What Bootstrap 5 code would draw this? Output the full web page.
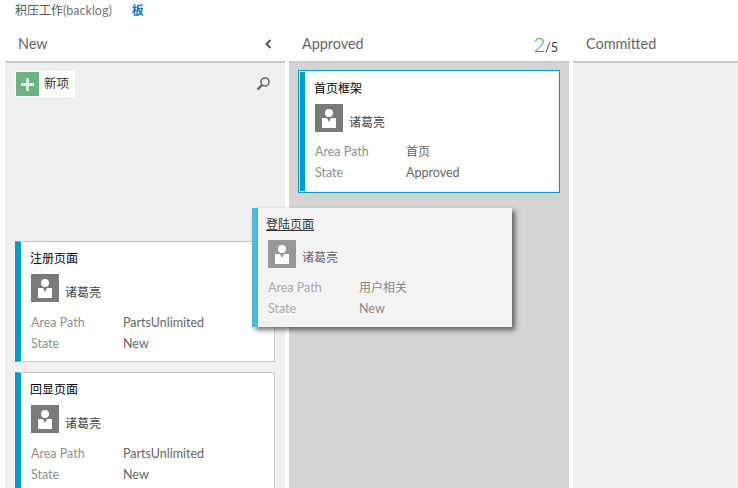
<!DOCTYPE html>
<html lang="zh"><head><meta charset="utf-8">
<link href="https://cdn.jsdelivr.net/npm/bootstrap@5.3.0/dist/css/bootstrap.min.css" rel="stylesheet">
<style>
html,body{height:488px;overflow:hidden;background:#fff}
body{font-family:"Lato","Noto Sans CJK SC",sans-serif;font-size:12px;color:#333;position:relative;width:738px}
.crumbs{height:26px;padding:3px 0 0 15px;font-size:12px;line-height:16px;color:#555;gap:20px}
.crumbs .cur{color:#007acc;font-weight:600}
.crumbs .en{color:#777;font-size:12.5px}
.board{height:462px;padding-left:5px;gap:4px;overflow:hidden}
.col-k{width:280px;flex:none}
.col-last{flex:1 1 auto;min-width:0}
.head{padding:9px 11px 0 13px;font-size:14.4px;line-height:18px;color:#666;border-bottom:2px solid #c8c8c8;box-sizing:content-box;height:26px}
.body-n,.body-c{background:#f0f0f0}
.body-a{background:#d4d4d4;padding:7px 9px;height:425px}
.body-n{padding:8px 10px;height:425px;overflow:hidden}
.body-c{height:425px}
.add{background:#fff;height:26px;padding-right:6px;font-size:12.5px;gap:5px}
.plus{width:23px;height:24px;background:#6bb37f;margin:1px 0 1px 1px}
.addrow{height:26px}
.spacer{height:144px}
.kcard{background:#fff;border:1px solid #c8c8c8;border-left:6px solid #009ccc;height:121px;padding:8px 10px;margin-bottom:10px;width:260px}
.kcard .t{color:#000;font-size:12px;line-height:18px;height:18px;margin-left:-1px}
.kcard.sel{width:262px;height:123px;border-color:#009ccc;border-left-width:7px;outline:1px solid #e8f4f8;outline-offset:-2px}
.kcard.sel .t{margin-top:1px}
.who{margin-top:6px;height:28px;font-size:12px;gap:6px;color:#444}
.who span{padding-top:11px;line-height:16px}
.ava{width:28px;height:28px;flex:none;display:block}
.f{line-height:21px;height:21px;font-size:12.5px;color:#666}
.f b{font-weight:400;color:#8f8f8f;width:92px;flex:none}
.f .zh{font-size:12px}
.fields{margin-top:10px}
.sel .fields{margin-top:9px}
.sel .f b,.drag .f b{width:91px}
.drag{position:absolute;left:252px;top:208px;height:119px;width:260px;margin:0;border-width:0 0 0 6px;border-left-color:#4bb8dc;background:#f3f3f3;box-shadow:3px 3px 5px rgba(0,0,0,.55);padding:7px 10px;color:#777}
.drag .t{color:#333;text-decoration:underline;margin:1px 0 0 -2px}
.drag .who{color:#666;margin-top:6px}
.drag .who span{padding-top:10px}
.drag .ava{opacity:.75}
.drag .fields{margin-top:9px}
.drag .f{color:#888}.drag .f b{color:#aaa}
.count{font-size:12.5px;color:#333}
.count i{font-style:normal;font-size:20px;line-height:18px;font-weight:300;color:#3a9d4f}
</style></head><body>
<div class="crumbs d-flex"><span>积压工作<span class="en">(backlog)</span></span><span class="cur">板</span></div>
<div class="board d-flex">
 <div class="col-k">
  <div class="head d-flex justify-content-between"><span>New</span>
   <svg width="12" height="18" viewBox="0 0 12 18"><path d="M8.5 5 4.5 9l4 4" fill="none" stroke="#555" stroke-width="2"/></svg></div>
  <div class="body-n">
   <div class="addrow d-flex justify-content-between align-items-center">
    <div class="add d-inline-flex align-items-center"><span class="plus d-flex align-items-center justify-content-center"><svg width="13" height="13" viewBox="0 0 13 13"><path d="M6.5 0v13M0 6.5h13" stroke="#fff" stroke-width="2.4"/></svg></span><span>新项</span></div>
    <svg width="16" height="16" viewBox="0 0 16 16" class="me-1"><circle cx="10" cy="6" r="4" fill="none" stroke="#666" stroke-width="1.6"/><path d="M7 9 2.5 13.5" stroke="#666" stroke-width="2.4"/></svg>
   </div>
   <div class="spacer"></div>
   <div class="kcard"><div class="t">注册页面</div>
    <div class="who d-flex"><svg class="ava" viewBox="0 0 28 28"><rect width="28" height="28" fill="#7a7a7a"/><circle cx="14" cy="9" r="4" fill="#fff"/><path d="M7 14h5l2 4 2-4h5v10H7z" fill="#fff"/></svg><span>诸葛亮</span></div>
    <div class="fields"><div class="f d-flex"><b>Area Path</b><span>PartsUnlimited</span></div><div class="f d-flex"><b>State</b><span>New</span></div></div></div>
   <div class="kcard"><div class="t">回显页面</div>
    <div class="who d-flex"><svg class="ava" viewBox="0 0 28 28"><rect width="28" height="28" fill="#7a7a7a"/><circle cx="14" cy="9" r="4" fill="#fff"/><path d="M7 14h5l2 4 2-4h5v10H7z" fill="#fff"/></svg><span>诸葛亮</span></div>
    <div class="fields"><div class="f d-flex"><b>Area Path</b><span>PartsUnlimited</span></div><div class="f d-flex"><b>State</b><span>New</span></div></div></div>
  </div>
 </div>
 <div class="col-k">
  <div class="head d-flex justify-content-between"><span>Approved</span><span class="count"><i>2</i>/5</span></div>
  <div class="body-a">
   <div class="kcard sel"><div class="t">首页框架</div>
    <div class="who d-flex"><svg class="ava" viewBox="0 0 28 28"><rect width="28" height="28" fill="#7a7a7a"/><circle cx="14" cy="9" r="4" fill="#fff"/><path d="M7 14h5l2 4 2-4h5v10H7z" fill="#fff"/></svg><span>诸葛亮</span></div>
    <div class="fields"><div class="f d-flex"><b>Area Path</b><span class="zh">首页</span></div><div class="f d-flex"><b>State</b><span>Approved</span></div></div></div>
  </div>
 </div>
 <div class="col-last">
  <div class="head"><span>Committed</span></div>
  <div class="body-c"></div>
 </div>
</div>
<div class="kcard drag"><div class="t">登陆页面</div>
 <div class="who d-flex"><svg class="ava" viewBox="0 0 28 28"><rect width="28" height="28" fill="#7a7a7a"/><circle cx="14" cy="9" r="4" fill="#fff"/><path d="M7 14h5l2 4 2-4h5v10H7z" fill="#fff"/></svg><span>诸葛亮</span></div>
 <div class="fields"><div class="f d-flex"><b>Area Path</b><span class="zh">用户相关</span></div><div class="f d-flex"><b>State</b><span>New</span></div></div></div>
<script src="https://cdn.jsdelivr.net/npm/bootstrap@5.3.0/dist/js/bootstrap.bundle.min.js"></script>
</body></html>
